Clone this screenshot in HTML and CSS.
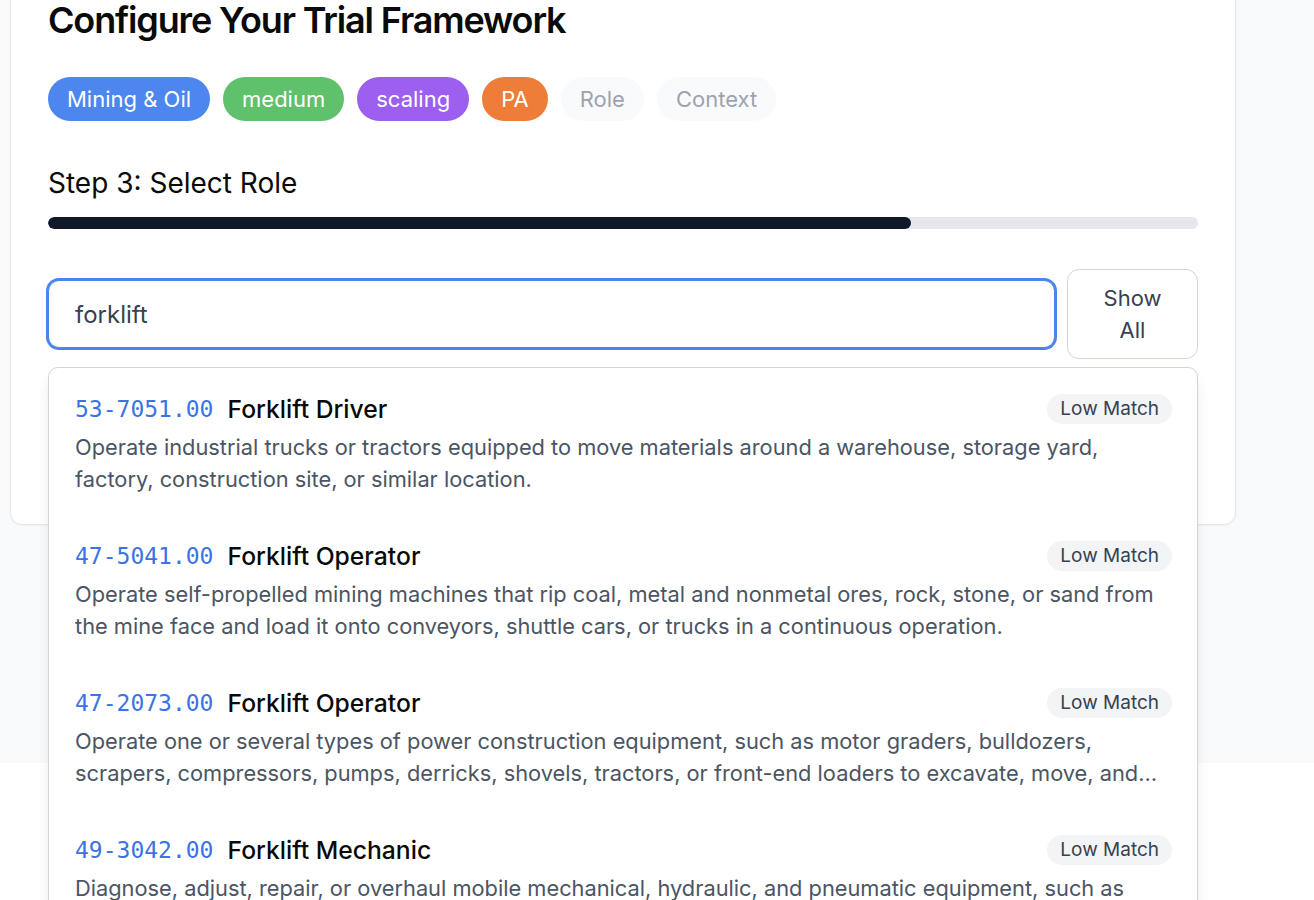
FILE: index.html
```html
<!DOCTYPE html>
<html lang="en">
<head>
<meta charset="utf-8">
<title>Configure Your Trial Framework</title>
<link rel="stylesheet" href="styles.css">
</head>
<body>
<div class="page">
  <div class="card">
    <h1 class="title">Configure Your Trial Framework</h1>
    <div class="chips">
      <span class="chip chip-blue">Mining &amp; Oil</span>
      <span class="chip chip-green">medium</span>
      <span class="chip chip-purple">scaling</span>
      <span class="chip chip-orange">PA</span>
      <span class="chip chip-empty">Role</span>
      <span class="chip chip-empty">Context</span>
    </div>
    <h2 class="step">Step 3: Select Role</h2>
    <div class="progress"><div class="progress-fill" style="width: 75%"></div></div>
    <div class="search-wrap">
      <div class="search-row">
        <input class="search-input" type="text" value="forklift">
        <button class="show-all">Show All</button>
      </div>
      <div class="dropdown">
        <div class="item">
          <div class="item-head">
            <span class="code">53-7051.00</span>
            <span class="name">Forklift Driver</span>
            <span class="badge">Low Match</span>
          </div>
          <p class="desc">Operate industrial trucks or tractors equipped to move materials around a warehouse, storage yard, factory, construction site, or similar location.</p>
        </div>
        <div class="item">
          <div class="item-head">
            <span class="code">47-5041.00</span>
            <span class="name">Forklift Operator</span>
            <span class="badge">Low Match</span>
          </div>
          <p class="desc">Operate self-propelled mining machines that rip coal, metal and nonmetal ores, rock, stone, or sand from the mine face and load it onto conveyors, shuttle cars, or trucks in a continuous operation.</p>
        </div>
        <div class="item">
          <div class="item-head">
            <span class="code">47-2073.00</span>
            <span class="name">Forklift Operator</span>
            <span class="badge">Low Match</span>
          </div>
          <p class="desc">Operate one or several types of power construction equipment, such as motor graders, bulldozers, scrapers, compressors, pumps, derricks, shovels, tractors, or front-end loaders to excavate, move, and grade earth, erect structures, or pour concrete or other hard surface pavement.</p>
        </div>
        <div class="item">
          <div class="item-head">
            <span class="code">49-3042.00</span>
            <span class="name">Forklift Mechanic</span>
            <span class="badge">Low Match</span>
          </div>
          <p class="desc">Diagnose, adjust, repair, or overhaul mobile mechanical, hydraulic, and pneumatic equipment, such as cranes, bulldozers, graders, and conveyors, used in construction, logging, and surface mining.</p>
        </div>
      </div>
    </div>
    <div class="actions"></div>
  </div>
</div>
</body>
</html>
```
FILE: styles.css
```css
* { box-sizing: border-box; }
html, body { margin: 0; background: #ffffff; }
body {
  font-family: Inter, "Noto Sans", "Liberation Sans", sans-serif;
  color: #111827;
  min-height: 1100px;
}
.page {
  background: #f9fafb;
  min-height: 805px;
  margin-top: -42px;
  padding-left: 10px;
}
.card {
  width: 1226px;
  background: #ffffff;
  border: 1px solid #e5e7eb;
  border-radius: 12px;
  padding: 41px 37px 37px 37px;
  box-shadow: 0 1px 2px rgba(0,0,0,0.04);
}
.title {
  margin: 0;
  font-size: 36px;
  line-height: 40px;
  font-weight: 600;
  letter-spacing: -0.032em;
  color: #0a0a0a;
}
.chips {
  display: flex;
  gap: 13px;
  margin-top: 37px;
}
.chip {
  display: inline-block;
  padding: 8px 19px;
  font-size: 22px;
  line-height: 28px;
  border-radius: 9999px;
  color: #ffffff;
}
.chip-blue { background: #4c86ee; }
.chip-green { background: #5fc16b; }
.chip-purple { background: #9c5ff0; }
.chip-orange { background: #ee7d3a; }
.chip-empty { background: #f9fafb; color: #9ca3af; }
.step {
  margin: 46px 0 0 0;
  font-size: 28px;
  line-height: 33px;
  font-weight: 400;
  color: #0a0a0a;
}
.progress {
  margin-top: 17px;
  height: 12px;
  background: #e5e7eb;
  border-radius: 9999px;
  overflow: hidden;
}
.progress-fill {
  height: 100%;
  background: #111827;
  border-radius: 9999px;
}
.search-wrap {
  position: relative;
  margin-top: 40px;
}
.search-row {
  display: flex;
  align-items: center;
  gap: 12px;
}
.search-input {
  flex: 1;
  height: 68px;
  border: 1px solid #4a86e8;
  box-shadow: 0 0 0 2px #4a86e8;
  border-radius: 11px;
  padding: 0 26px;
  font-family: inherit;
  font-size: 24px;
  color: #374151;
  outline: none;
  background: #ffffff;
}
.show-all {
  width: 131px;
  height: 90px;
  padding: 0 28px;
  border: 1px solid #d1d5db;
  border-radius: 12px;
  background: #ffffff;
  font-family: inherit;
  font-size: 22px;
  line-height: 32px;
  color: #374151;
  text-align: center;
}
.dropdown {
  position: absolute;
  left: 0;
  right: 0;
  top: 98px;
  background: #ffffff;
  border: 1px solid #d1d5db;
  border-radius: 10px;
  box-shadow: 0 10px 15px -3px rgba(0,0,0,0.1), 0 4px 6px -4px rgba(0,0,0,0.1);
  z-index: 10;
}
.item {
  padding: 25px 25px 20px 26px;
}
.item-head {
  display: flex;
  align-items: center;
  height: 32px;
}
.code {
  font-family: "DejaVu Sans Mono", "Liberation Mono", monospace;
  font-size: 23px;
  color: #3b73e4;
  margin-right: 14px;
}
.name {
  font-size: 24.7px;
  line-height: 32px;
  font-weight: 500;
  color: #0a0a0a;
}
.badge {
  margin-left: auto;
  background: #f3f4f6;
  color: #374151;
  font-size: 19px;
  line-height: 30px;
  padding: 0 13px;
  border-radius: 9999px;
}
.desc {
  margin: 6px 0 0 0;
  font-size: 21.8px;
  line-height: 32px;
  color: #4b5563;
  display: -webkit-box;
  -webkit-line-clamp: 2;
  -webkit-box-orient: vertical;
  overflow: hidden;
}
.actions {
  height: 128px;
}
```
